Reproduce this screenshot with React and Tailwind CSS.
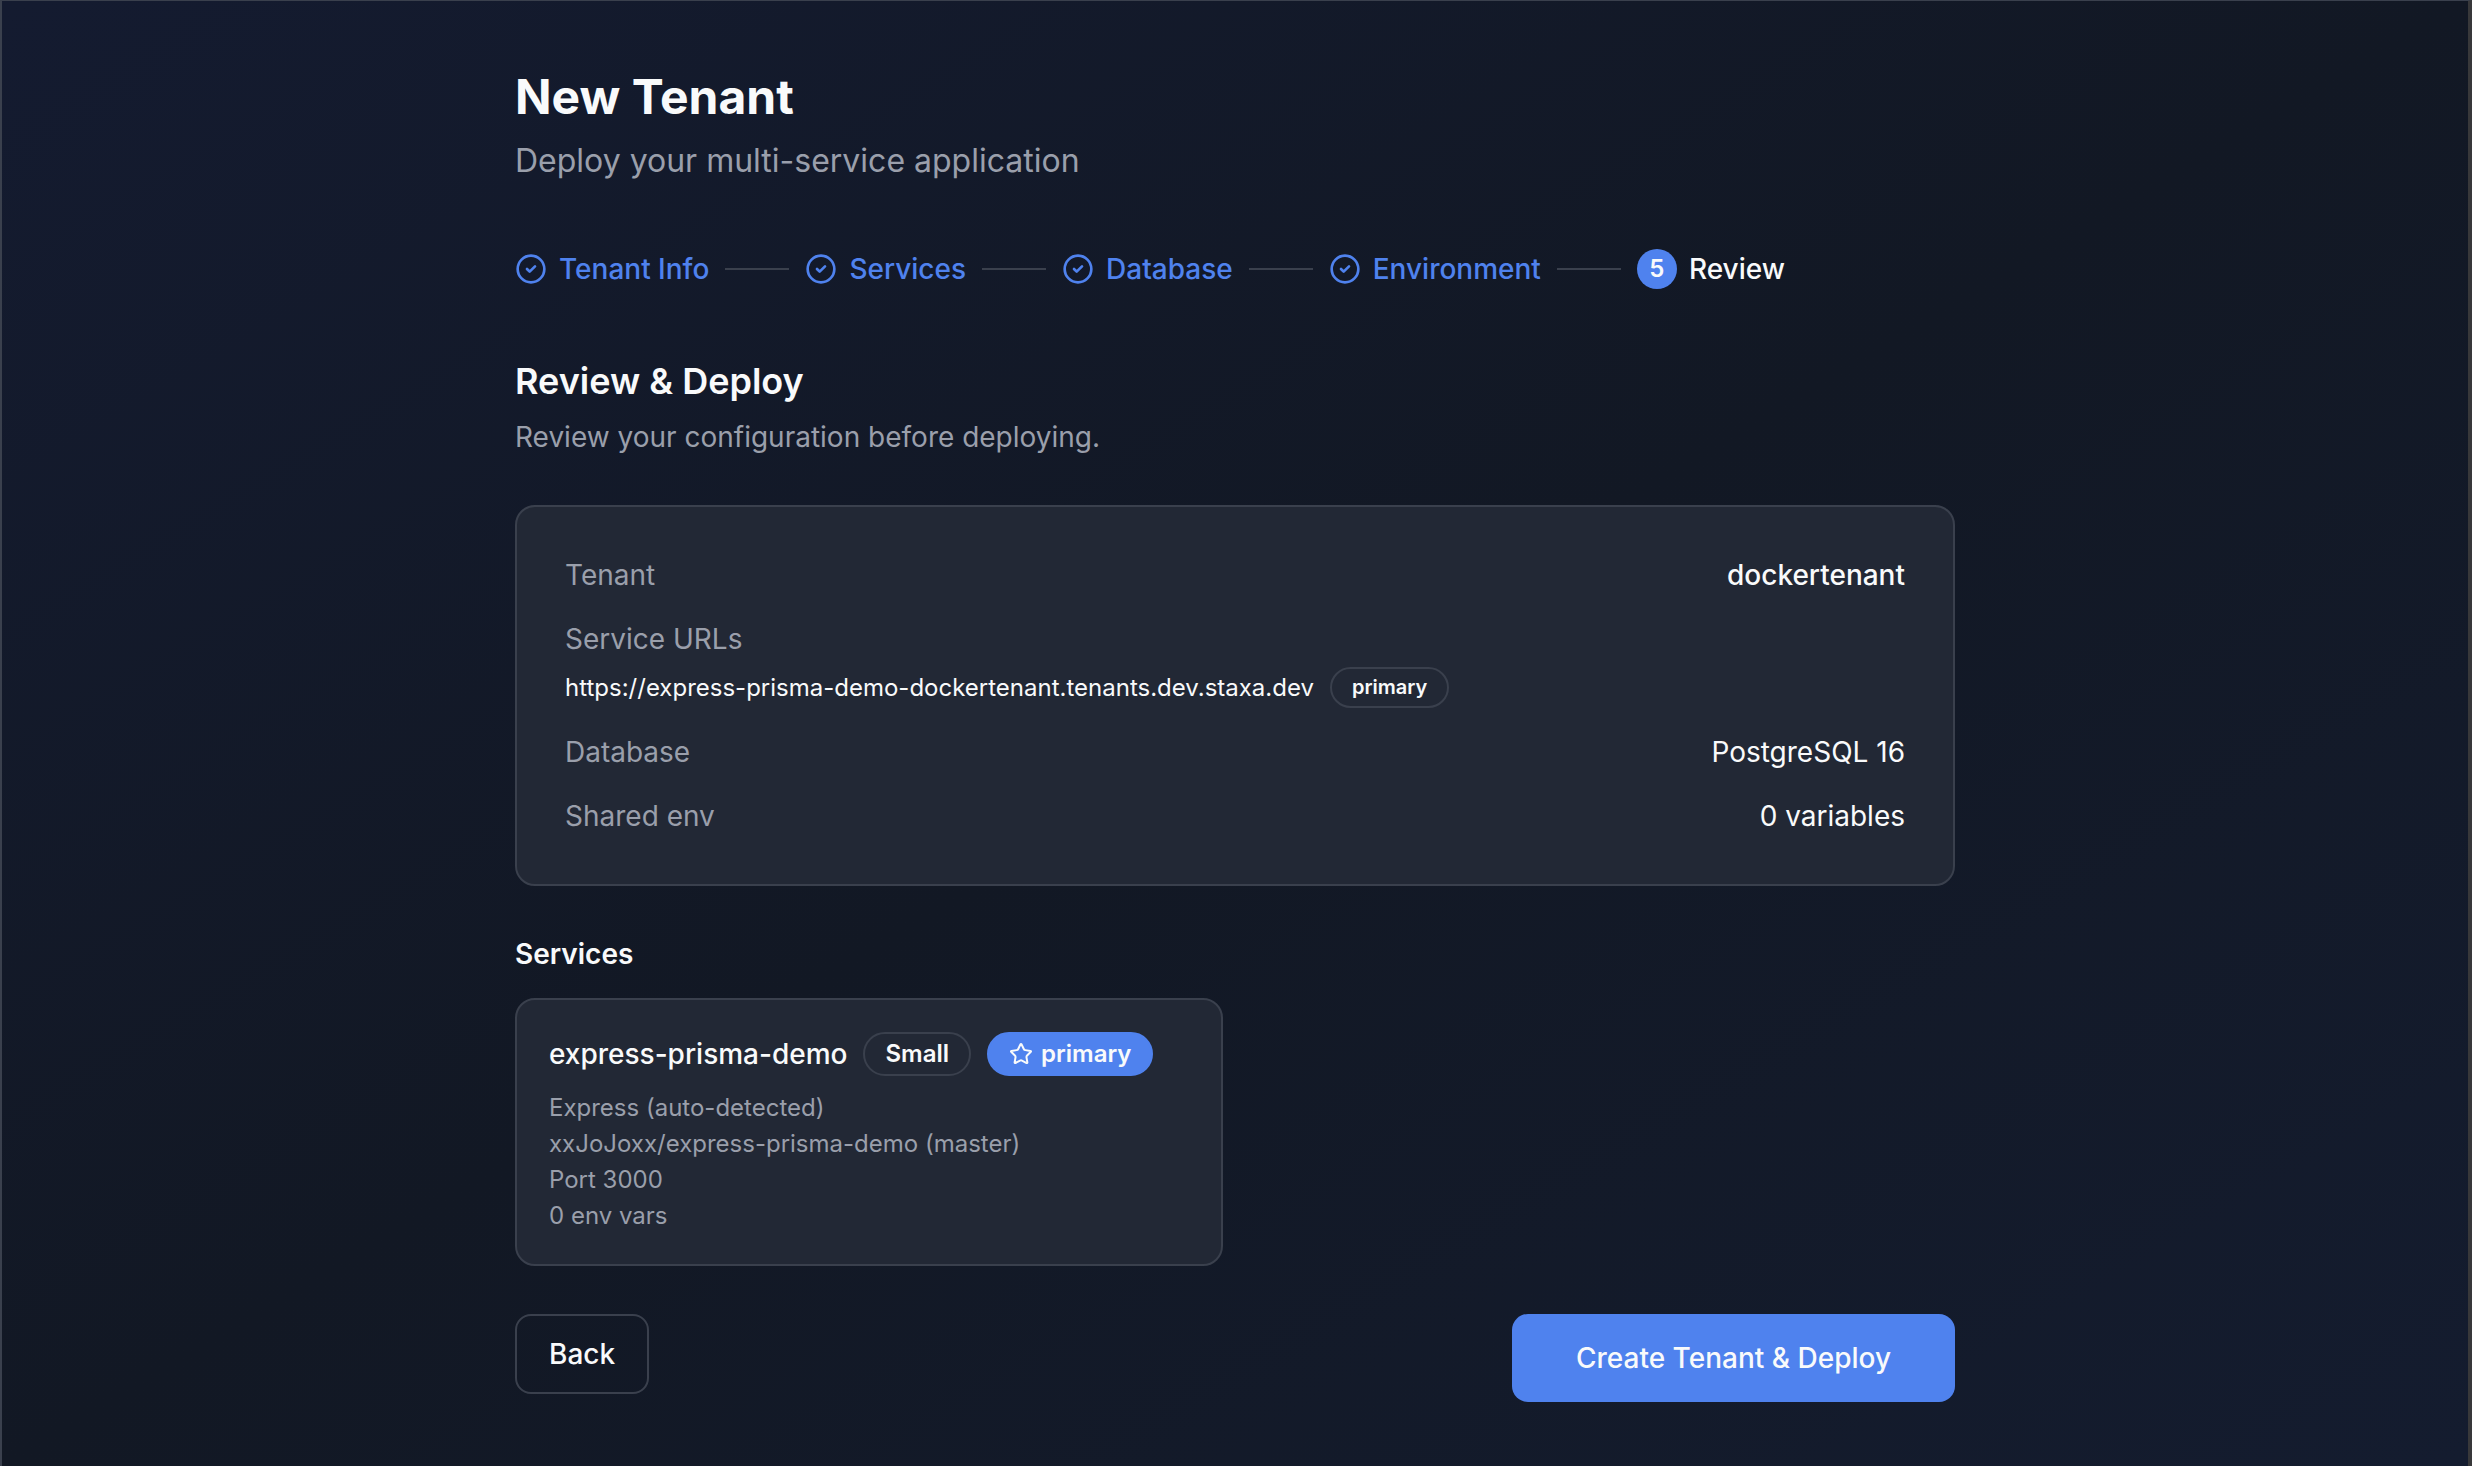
import React from "react";
import { CircleCheck, Star } from "lucide-react";

const steps = ["Tenant Info", "Services", "Database", "Environment", "Review"];
const currentStep = 4;

const services = [
  {
    name: "express-prisma-demo",
    size: "Small",
    primary: true,
    details: [
      "Express (auto-detected)",
      "xxJoJoxx/express-prisma-demo (master)",
      "Port 3000",
      "0 env vars",
    ],
  },
];

const Stepper = () => (
  <ol className="flex flex-wrap items-center gap-4 text-[28px] leading-10 font-medium">
    {steps.map((label, i) => (
      <React.Fragment key={label}>
        {i > 0 && <li aria-hidden="true" className="h-0.5 w-16 bg-[#3a404d]" />}
        {i < currentStep ? (
          <li className="flex items-center gap-3 text-[#4f82ee]">
            <CircleCheck className="size-8" />
            {label}
          </li>
        ) : (
          <li
            aria-current="step"
            className="flex items-center gap-3 text-gray-50"
          >
            <span className="flex size-10 items-center justify-center rounded-full bg-[#4f82ee] text-2xl font-semibold">
              {i + 1}
            </span>
            {label}
          </li>
        )}
      </React.Fragment>
    ))}
  </ol>
);

const Row = ({ label, value, bold }) => (
  <div className="flex justify-between">
    <dt className="text-[#9a9fab]">{label}</dt>
    <dd className={bold ? "font-medium" : "font-normal"}>{value}</dd>
  </div>
);

const ServiceCard = ({ service }) => (
  <article className="rounded-[20px] border-2 border-[#3a404d] bg-[#222835] p-8">
    <div className="flex items-center gap-4">
      <h4 className="text-[28px] leading-10 font-medium">{service.name}</h4>
      <span className="rounded-full border-2 border-[#3a404d] px-5 py-1 text-2xl font-semibold">
        {service.size}
      </span>
      {service.primary && (
        <span className="flex items-center gap-2 rounded-full border-2 border-[#4f82ee] bg-[#4f82ee] px-5 py-1 text-2xl font-semibold">
          <Star className="size-6" />
          primary
        </span>
      )}
    </div>
    <ul className="mt-4 space-y-1 text-2xl text-[#9a9fab]">
      {service.details.map((d) => (
        <li key={d}>{d}</li>
      ))}
    </ul>
  </article>
);

export default function App() {
  return (
    <div className="min-h-screen border-t border-r-4 border-l-2 border-t-[#3a404d] border-r-[#38383a] border-l-[#3a404d] bg-linear-to-br from-[#141b30] via-[#121824] to-[#141c2f] font-['Inter',sans-serif] text-gray-50">
      <main className="mx-auto max-w-[1440px] py-16">
        <header>
          <h1 className="text-5xl leading-16 font-bold">New Tenant</h1>
          <p className="mt-2 text-[32px] leading-12 text-[#9a9fab]">
            Deploy your multi-service application
          </p>
        </header>

        <nav aria-label="Progress" className="mt-16">
          <Stepper />
        </nav>

        {/* Review */}
        <section className="mt-16">
          <h2 className="text-4xl leading-14 font-semibold">
            Review & Deploy
          </h2>
          <p className="mt-2 text-[28px] leading-10 text-[#9a9fab]">
            Review your configuration before deploying.
          </p>

          <dl className="mt-12 space-y-6 rounded-[20px] border-2 border-[#3a404d] bg-[#222835] p-12 text-[28px] leading-10">
            <Row label="Tenant" value="dockertenant" bold />
            <div>
              <dt className="text-[#9a9fab]">Service URLs</dt>
              <dd className="mt-2 flex items-center gap-4 text-2xl">
                https://express-prisma-demo-dockertenant.tenants.dev.staxa.dev
                <span className="rounded-full border-2 border-[#3a404d] px-5 py-1 text-xl leading-[29px] font-semibold">
                  primary
                </span>
              </dd>
            </div>
            <Row label="Database" value="PostgreSQL 16" />
            <Row label="Shared env" value="0 variables" />
          </dl>
        </section>

        {/* Services */}
        <section className="mt-12">
          <h3 className="text-[28px] leading-10 font-semibold">Services</h3>
          <div className="mt-6 grid grid-cols-2 gap-6">
            {services.map((s) => (
              <ServiceCard key={s.name} service={s} />
            ))}
          </div>
        </section>

        <footer className="mt-12 flex items-start justify-between text-[28px] leading-10 font-medium">
          <button
            type="button"
            className="rounded-2xl border-2 border-[#3a404d] px-8 py-[18px]"
          >
            Back
          </button>
          <button
            type="button"
            className="rounded-2xl bg-[#4f82ee] px-16 py-6"
          >
            Create Tenant & Deploy
          </button>
        </footer>
      </main>
    </div>
  );
}
